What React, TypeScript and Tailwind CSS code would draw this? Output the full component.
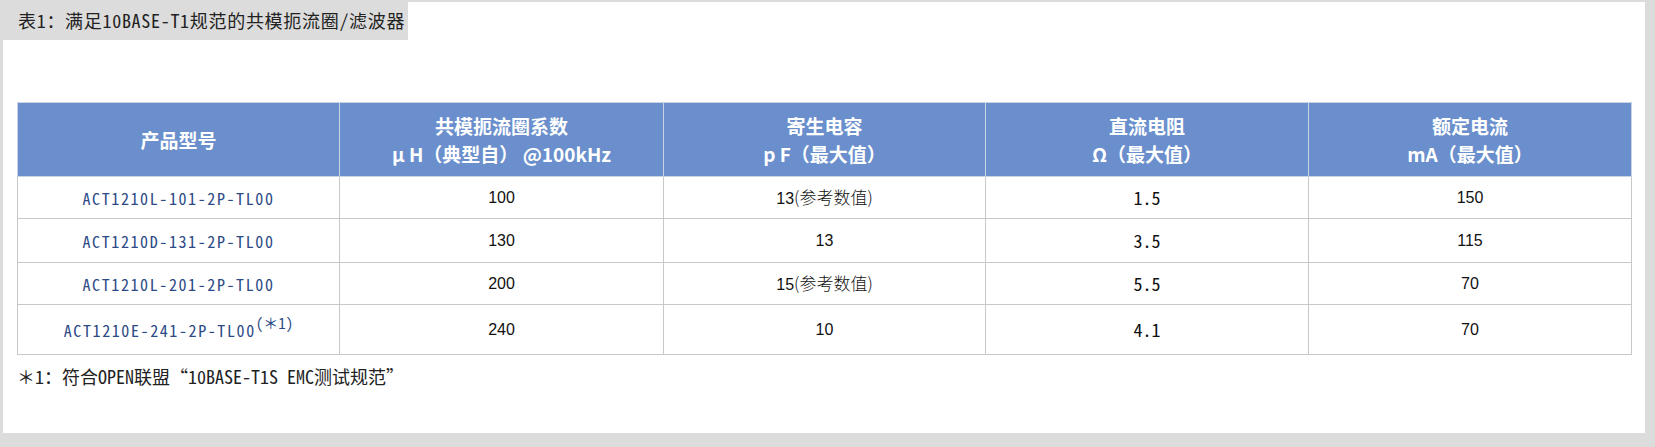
const mono = "font-['Noto_Sans_Mono_CJK_SC','Noto_Sans_CJK_SC',monospace]";

type Row = {
  model: string,
  note?: boolean,
  inductance: string,
  capacitance: string,
  capNote?: boolean,
  resistance: string,
  current: string,
  height: string,
}

const rows: Row[] = [
  { model: "ACT1210L-101-2P-TL00", inductance: "100", capacitance: "13", capNote: true, resistance: "1.5", current: "150", height: "h-[42px]" },
  { model: "ACT1210D-131-2P-TL00", inductance: "130", capacitance: "13", resistance: "3.5", current: "115", height: "h-[44px]" },
  { model: "ACT1210L-201-2P-TL00", inductance: "200", capacitance: "15", capNote: true, resistance: "5.5", current: "70", height: "h-[42px]" },
  { model: "ACT1210E-241-2P-TL00", note: true, inductance: "240", capacitance: "10", resistance: "4.1", current: "70", height: "h-[50px]" },
]

const HeadCell = ({ top, bottom }: { top: string, bottom?: string }) => (
  <th className="border border-[#c9d3e4] bg-[#6a8fcc] text-white font-bold text-[19px] leading-[28px] font-['Noto_Sans_CJK_SC',sans-serif] text-center align-middle">
    <div>{top}</div>
    {bottom && <div>{bottom}</div>}
  </th>
)

const numCell = "border border-[#c8c8c8] text-center align-middle text-[16px] text-[#111] font-['Liberation_Sans','Noto_Sans_CJK_SC',sans-serif]";

export default function App() {
  return (
    <div className="w-[1655px] h-[447px] bg-[#dcdcdc] flex flex-col">
      <div className="flex h-[40px]">
        <div className={`w-[408px] h-[40px] pl-[18px] flex items-center text-[18px] tracking-[0.7px] text-[#222] ${mono}`}>
          表1：满足10BASE-T1规范的共模扼流圈/滤波器
        </div>
        <div className="flex-1 mt-[2px] mr-[10px] bg-white" />
      </div>
      <div className="flex-1 ml-[3px] mr-[10px] mb-[14px] bg-white px-[14px] pt-[62px]">
        <table className="table-fixed border-collapse w-[1614px]">
          <colgroup>
            <col className="w-[322px]" />
            <col className="w-[324px]" />
            <col className="w-[322px]" />
            <col className="w-[323px]" />
            <col className="w-[323px]" />
          </colgroup>
          <thead>
            <tr className="h-[74px]">
              <HeadCell top="产品型号" />
              <HeadCell top="共模扼流圈系数" bottom="μ H（典型自） @100kHz" />
              <HeadCell top="寄生电容" bottom="p F（最大值）" />
              <HeadCell top="直流电阻" bottom="Ω（最大值）" />
              <HeadCell top="额定电流" bottom="mA（最大值）" />
            </tr>
          </thead>
          <tbody>
            {rows.map((r) => (
              <tr key={r.model} className={r.height}>
                <td className={`border border-[#c8c8c8] text-center align-middle text-[16px] tracking-[1.6px] text-[#2c4a86] ${mono}`}>
                  {r.model}
                  {r.note && <sup className="text-[15px] tracking-normal">(＊1)</sup>}
                </td>
                <td className={numCell}>{r.inductance}</td>
                <td className={numCell}>
                  {r.capacitance}
                  {r.capNote && <span className="font-['Noto_Sans_CJK_SC',sans-serif] text-[17px] font-light">(参考数值)</span>}
                </td>
                <td className={`border border-[#c8c8c8] text-center align-middle text-[18px] text-[#111] ${mono}`}>{r.resistance}</td>
                <td className={numCell}>{r.current}</td>
              </tr>
            ))}
          </tbody>
        </table>
        <p className={`mt-[8px] text-[18px] text-[#222] ${mono}`}>
          ＊1：符合OPEN联盟“10BASE-T1S EMC测试规范”
        </p>
      </div>
    </div>
  )
}
